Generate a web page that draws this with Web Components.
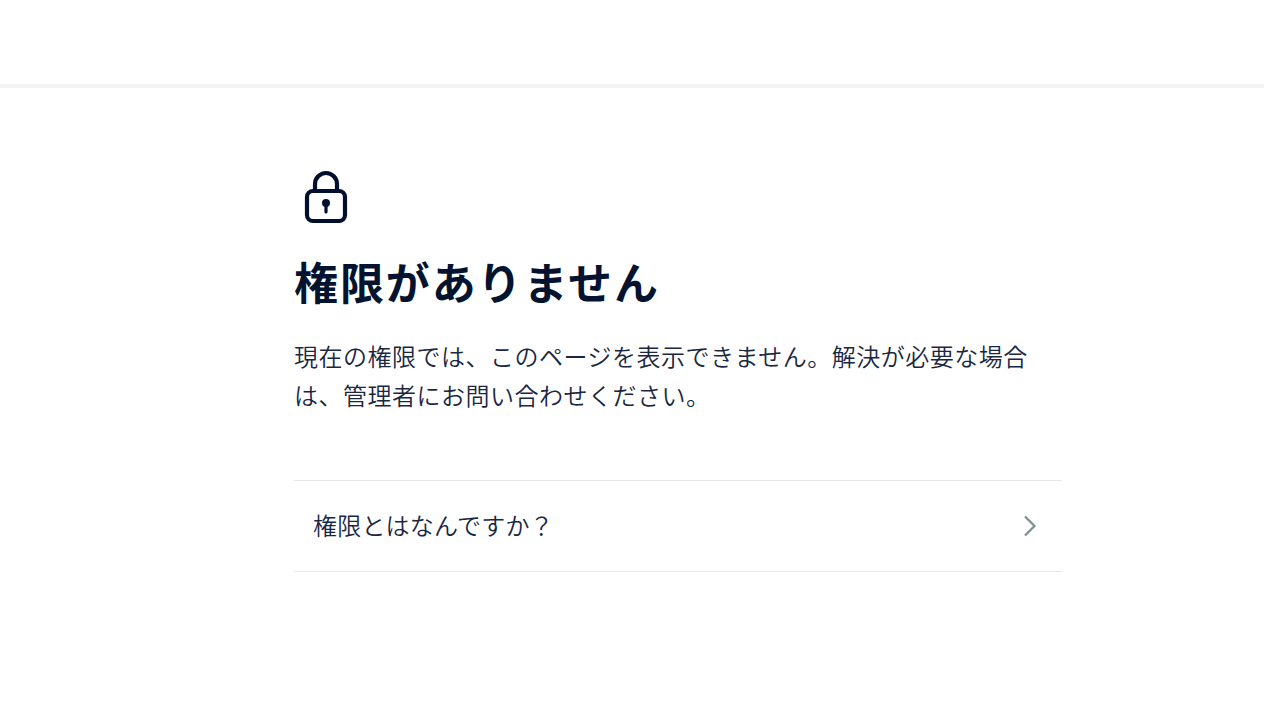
<!DOCTYPE html>
<html lang="ja">
<head>
<meta charset="utf-8">
<title>権限がありません</title>
<style>
	html, body { margin: 0; background: #fff; }
	body { font-family: "Noto Sans CJK JP", "Noto Sans", sans-serif; color: #000f2d; }
</style>
</head>
<body>
<app-header></app-header>
<no-permission>
	<span slot="title">権限がありません</span>
	現在の権限では、このページを表示できません。解決が必要な場合は、管理者にお問い合わせください。
	<help-link slot="links">権限とはなんですか？</help-link>
</no-permission>
<script>
class AppHeader extends HTMLElement {
	constructor() {
		super();
		this.attachShadow({ mode: 'open' });
		this.shadowRoot.innerHTML = `
<style>
	:host { display: block; height: 84px; border-bottom: 4px solid #f3f3f4; }
</style>`;
	}
}

const noPermissionTemplate = document.createElement('template');
noPermissionTemplate.innerHTML = `
<style>
	:host { display: block; width: 768px; margin-left: 294px; padding: 80px 0 0; }
	.icon { display: block; width: 64px; height: 64px; }
	h1 { margin: 17px 0 0; font-size: 44px; line-height: 64px; font-weight: 700; letter-spacing: 1.9px; color: #04132f; }
	p { margin: 23px 0 0; font-size: 24px; line-height: 39px; letter-spacing: 0.5px; font-weight: 350; color: #1a2742; }
	.links { margin-top: 66px; border-top: 1px solid #e6e7e8; }
</style>
<svg class="icon" viewBox="0 0 64 64" fill="none" stroke="#000f2d" stroke-width="4.200" aria-hidden="true">
	<rect x="13" y="23" width="38" height="30" rx="6"/>
	<path d="M21 23 V16 a11 11 0 0 1 22 0 V23"/>
	<circle cx="32" cy="35" r="4" fill="#000f2d" stroke="none"/>
	<path d="M32 36 V44" stroke-linecap="round" stroke-width="3.200"/>
</svg>
<h1><slot name="title"></slot></h1>
<p><slot></slot></p>
<div class="links"><slot name="links"></slot></div>
`;

class NoPermission extends HTMLElement {
	constructor() {
		super();
		this.attachShadow({ mode: 'open' });
		this.shadowRoot.appendChild(noPermissionTemplate.content.cloneNode(true));
	}
}

const helpLinkTemplate = document.createElement('template');
helpLinkTemplate.innerHTML = `
<style>
	:host { display: flex; align-items: center; justify-content: space-between; height: 90px; padding: 0 25px 0 19px; border-bottom: 1px solid #e6e7e8; font-size: 24px; font-weight: 350; letter-spacing: 0.2px; color: #1a2742; }
	span { margin-bottom: 4px; }
	svg { width: 14px; height: 22px; }
</style>
<span><slot></slot></span>
<svg viewBox="0 0 14 22" fill="none" stroke="#7f9095" stroke-width="2.300" aria-hidden="true">
	<path d="M2 1.500 L11.500 11 L2 20.500"/>
</svg>
`;

class HelpLink extends HTMLElement {
	constructor() {
		super();
		this.attachShadow({ mode: 'open' });
		this.shadowRoot.appendChild(helpLinkTemplate.content.cloneNode(true));
	}
}

customElements.define('app-header', AppHeader);
customElements.define('no-permission', NoPermission);
customElements.define('help-link', HelpLink);
</script>
</body>
</html>
